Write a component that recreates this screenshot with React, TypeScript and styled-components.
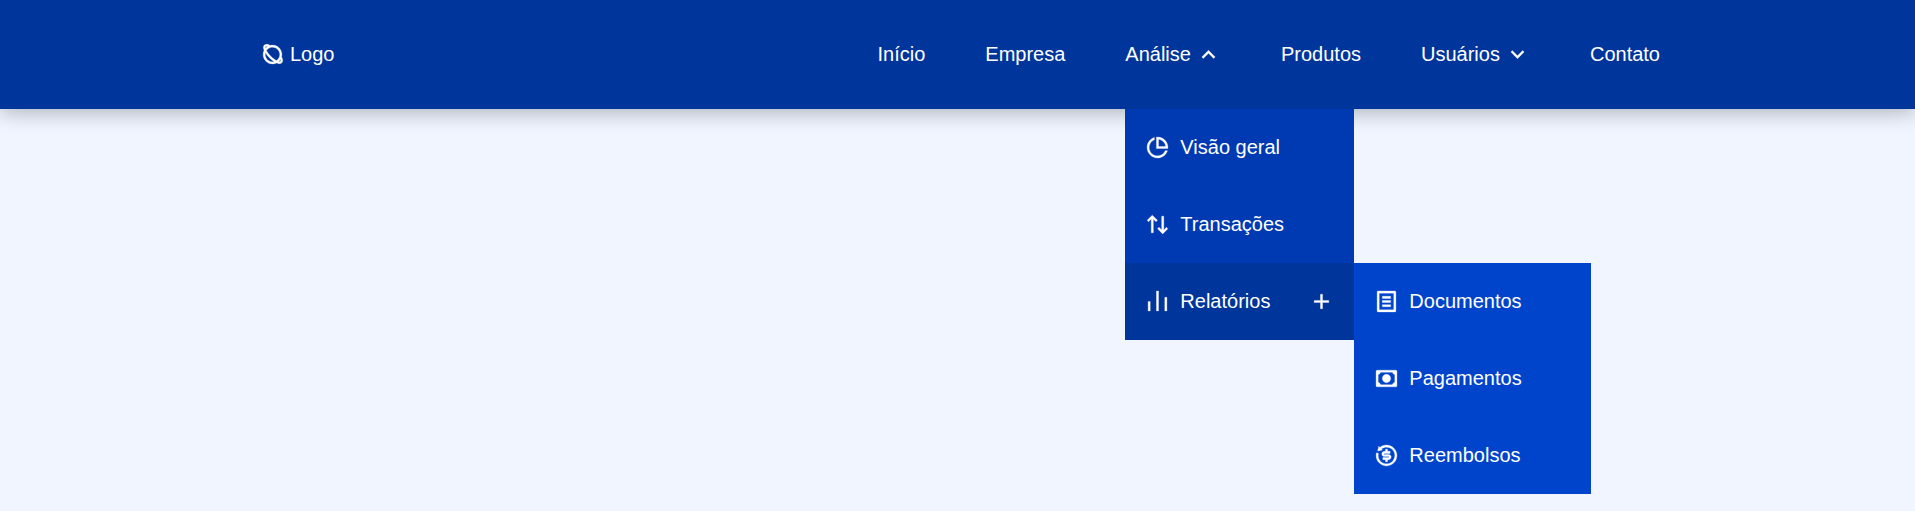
import React from 'react';
import styled, { createGlobalStyle, css } from 'styled-components';
import {
  RiPlanetLine, RiArrowDownSLine, RiPieChartLine, RiArrowUpDownLine,
  RiBarChartLine, RiAddLine, RiFileListLine, RiCashLine, RiRefund2Line,
} from 'react-icons/ri';

const GlobalStyle = createGlobalStyle`
  * { box-sizing: border-box; margin: 0; padding: 0; }
  body {
    background: #f0f5ff;
    color: #fff;
    font-family: "Liberation Sans", Arial, sans-serif;
    font-size: 20px;
    line-height: 23px;
  }
  ul { list-style: none; }
  a { color: inherit; text-decoration: none; }
  svg {
    display: block;
    flex: none;
    width: 25px;
    height: 25px;
    stroke: currentColor;
    stroke-width: 0.3;
  }
`;

const Page = styled.div`
  height: 100vh;
  overflow: hidden;
`;

const Header = styled.header`
  height: 109px;
  background: #00359c;
  box-shadow: 0 2.5px 20px hsla(220, 32%, 8%, 0.3);
`;

const Nav = styled.nav`
  width: 1660px;
  height: 100%;
  padding-left: 260px;
  display: flex;
  align-items: center;
  justify-content: space-between;
`;

const Logo = styled.a`
  display: flex;
  align-items: center;
  gap: 5px;
`;

const NavList = styled.ul`
  height: 100%;
  display: flex;
  gap: 60px;
`;

const NavItem = styled.li`
  position: relative;
`;

const NavLink = styled.a<{ $open?: boolean }>`
  height: 100%;
  display: flex;
  align-items: center;
  gap: 5px;
  ${({ $open }) => $open && css`svg { transform: rotate(180deg); }`}
`;

const Menu = styled.ul<{ $sub?: boolean }>`
  position: absolute;
  top: ${({ $sub }) => ($sub ? '0' : '100%')};
  left: ${({ $sub }) => ($sub ? '100%' : '0')};
  width: ${({ $sub }) => ($sub ? '237px' : '229px')};
  background: ${({ $sub }) => ($sub ? '#0044cc' : '#003ab3')};
`;

const MenuItem = styled.li`
  position: relative;
`;

const MenuLink = styled.a<{ $active?: boolean }>`
  height: 77px;
  padding: 0 20px;
  display: flex;
  align-items: center;
  gap: 10px;
  background: ${({ $active }) => ($active ? '#00359c' : 'transparent')};
`;

const Expand = styled(RiAddLine)`
  margin-left: auto;
`;

export default function App() {
  return (
    <>
      <GlobalStyle />
      <Page>
        <Header>
          <Nav>
            <Logo href="#"><RiPlanetLine /> Logo</Logo>
            <NavList>
              <NavItem><NavLink href="#">Início</NavLink></NavItem>
              <NavItem><NavLink href="#">Empresa</NavLink></NavItem>
              <NavItem>
                <NavLink href="#" $open>Análise <RiArrowDownSLine /></NavLink>
                <Menu>
                  <MenuItem><MenuLink href="#"><RiPieChartLine /> Visão geral</MenuLink></MenuItem>
                  <MenuItem><MenuLink href="#"><RiArrowUpDownLine /> Transações</MenuLink></MenuItem>
                  <MenuItem>
                    <MenuLink href="#" $active><RiBarChartLine /> Relatórios <Expand /></MenuLink>
                    <Menu $sub>
                      <MenuItem><MenuLink href="#"><RiFileListLine /> Documentos</MenuLink></MenuItem>
                      <MenuItem><MenuLink href="#"><RiCashLine /> Pagamentos</MenuLink></MenuItem>
                      <MenuItem><MenuLink href="#"><RiRefund2Line /> Reembolsos</MenuLink></MenuItem>
                    </Menu>
                  </MenuItem>
                </Menu>
              </NavItem>
              <NavItem><NavLink href="#">Produtos</NavLink></NavItem>
              <NavItem><NavLink href="#">Usuários <RiArrowDownSLine /></NavLink></NavItem>
              <NavItem><NavLink href="#">Contato</NavLink></NavItem>
            </NavList>
          </Nav>
        </Header>
      </Page>
    </>
  );
}
